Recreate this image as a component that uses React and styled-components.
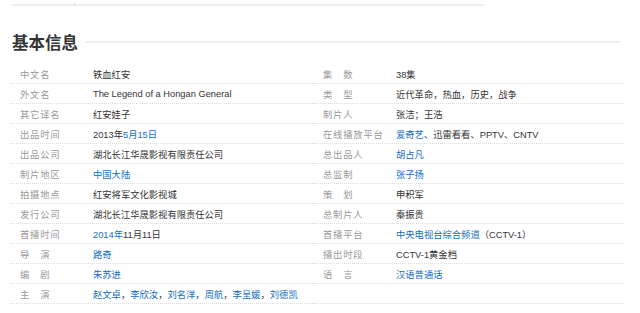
import React from "react";
import styled, { createGlobalStyle } from "styled-components";

const GlobalStyle = createGlobalStyle`
  body {
    margin: 0;
    background: #fff;
    font-family: "Liberation Sans", "Noto Sans CJK SC", sans-serif;
  }
`;

const left = [
  { name: "中文名", value: "铁血红安" },
  { name: "外文名", value: "The Legend of a Hongan General" },
  { name: "其它译名", value: "红安娃子" },
  { name: "出品时间", value: [["2013年"], ["5月15日", true]] },
  { name: "出品公司", value: "湖北长江华晟影视有限责任公司" },
  { name: "制片地区", value: [["中国大陆", true]] },
  { name: "拍摄地点", value: "红安将军文化影视城" },
  { name: "发行公司", value: "湖北长江华晟影视有限责任公司" },
  { name: "首播时间", value: [["2014年", true], ["11月11日"]] },
  { name: "导　演", value: [["路奇", true]] },
  { name: "编　剧", value: [["朱苏进", true]] },
  {
    name: "主　演",
    value: [
      ["赵文卓", true], ["，"], ["李欣汝", true], ["，"], ["刘名洋", true], ["，"],
      ["周航", true], ["，"], ["李呈媛", true], ["，"], ["刘德凯", true],
    ],
  },
];

const right = [
  { name: "集　数", value: "38集" },
  { name: "类　型", value: "近代革命，热血，历史，战争" },
  { name: "制片人", value: "张洁；王浩" },
  { name: "在线播放平台", value: [["爱奇艺", true], ["、迅雷看看、PPTV、CNTV"]] },
  { name: "总出品人", value: [["胡占凡", true]] },
  { name: "总监制", value: [["张子扬", true]] },
  { name: "策　划", value: "申积军" },
  { name: "总制片人", value: "秦振贵" },
  { name: "首播平台", value: [["中央电视台综合频道", true], ["（CCTV-1）"]] },
  { name: "播出时段", value: "CCTV-1黄金档" },
  { name: "语　言", value: [["汉语普通话", true]] },
  { name: "", value: "" },
];

const Value = ({ value }) =>
  typeof value === "string"
    ? value
    : value.map(([text, link], i) => (
        <Part key={i} $link={link}>
          {text}
        </Part>
      ));

const App = () => (
  <Page>
    <GlobalStyle />
    <TopBar />
    <TitleRow>
      <Title>基本信息</Title>
      <TitleLine />
    </TitleRow>
    <Table>
      {[left, right].map((items, c) => (
        <Column key={c} $width={c === 0 ? 303 : 310}>
          {items.map((item, i) => (
            <Row key={i}>
              <Name>{item.name}</Name>
              <Data>
                <Value value={item.value} />
              </Data>
            </Row>
          ))}
        </Column>
      ))}
    </Table>
  </Page>
);

const Page = styled.div`
  width: 640px;
  height: 313px;
  overflow: hidden;
  padding-top: 4px;
  box-sizing: border-box;
`;

const TopBar = styled.div`
  position: relative;
  margin-left: 12px;
  width: 472px;
  height: 2px;
  background: #ececec;
  &:after {
    content: "";
    position: absolute;
    left: 62px;
    top: -2px;
    width: 1px;
    height: 3px;
    background: #e2e2e2;
  }
`;

const TitleRow = styled.div`
  display: flex;
  align-items: center;
  height: 24px;
  margin-top: 24px;
  padding-left: 12px;
  padding-right: 19px;
`;

const Title = styled.h2`
  margin: 0;
  font-family: "Noto Sans CJK SC", sans-serif;
  font-size: 16.5px;
  font-weight: 700;
  color: #333;
  line-height: 24px;
`;

const TitleLine = styled.div`
  flex: 1;
  height: 2px;
  margin-left: 8px;
  background: #eeeeee;
`;

const Table = styled.div`
  display: flex;
  margin-top: 10px;
  padding-left: 10px;
`;

const Column = styled.div`
  width: ${(p) => p.$width}px;
  display: flex;
  flex-direction: column;
`;

const Row = styled.div`
  display: flex;
  align-items: center;
  height: 20px;
  box-sizing: border-box;
  border-bottom: 1px dotted #dcdcdc;
  font-size: 9.3px;
  white-space: nowrap;
`;

const Name = styled.div`
  width: 83px;
  flex: none;
  box-sizing: border-box;
  padding-left: 10px;
  color: #999;
  letter-spacing: 0.8px;
`;

const Data = styled.div`
  color: #333;
`;

const Part = styled.span`
  color: ${(p) => (p.$link ? "#136ec2" : "#333")};
`;

export default App;
